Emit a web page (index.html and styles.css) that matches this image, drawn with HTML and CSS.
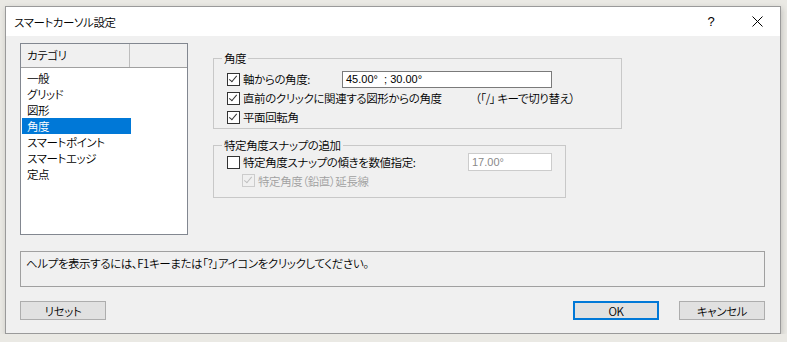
FILE: index.html
```html
<!DOCTYPE html>
<html lang="ja">
<head>
  <meta charset="UTF-8">
  <title>スマートカーソル設定</title>
  <link rel="stylesheet" href="styles.css">
</head>
<body>
  <div class="dialog">
    <div class="titlebar">
      <span class="title">スマートカーソル設定</span>
      <span class="help-btn">?</span>
      <span class="close-btn">
        <svg width="11" height="11" viewBox="0 0 11 11"><path d="M0.5 0.5 L10.5 10.5 M10.5 0.5 L0.5 10.5" stroke="#000" stroke-width="1" fill="none"/></svg>
      </span>
    </div>

    <div class="content">
      <div class="top">
        <div class="category-list">
          <div class="list-header">
            <span class="col-main">カテゴリ</span>
            <span class="col-rest"></span>
          </div>
          <ul class="list-items">
            <li>一般</li>
            <li>グリッド</li>
            <li>図形</li>
            <li class="selected">角度</li>
            <li>スマートポイント</li>
            <li>スマートエッジ</li>
            <li>定点</li>
          </ul>
        </div>

        <div class="settings">
          <fieldset class="group group-angle">
            <legend>角度</legend>
            <div class="row">
              <span class="check checked"></span>
              <span class="label label-axis">軸からの角度:</span>
              <span class="textbox textbox-wide">45.00°&nbsp;&nbsp;; 30.00°</span>
            </div>
            <div class="row">
              <span class="check checked"></span>
              <span class="label label-prev">直前のクリックに関連する図形からの角度</span>
              <span class="note">（「/」 キーで切り替え）</span>
            </div>
            <div class="row">
              <span class="check checked"></span>
              <span class="label">平面回転角</span>
            </div>
          </fieldset>

          <fieldset class="group group-snap">
            <legend>特定角度スナップの追加</legend>
            <div class="row">
              <span class="check"></span>
              <span class="label label-snap">特定角度スナップの傾きを数値指定:</span>
              <span class="textbox textbox-disabled">17.00°</span>
            </div>
            <div class="row row-sub">
              <span class="check checked disabled"></span>
              <span class="label disabled-text">特定角度（鉛直）延長線</span>
            </div>
          </fieldset>
        </div>
      </div>

      <div class="help-box">ヘルプを表示するには、F1キーまたは「?」アイコンをクリックしてください。</div>

      <div class="buttons">
        <button class="btn">リセット</button>
        <span class="spacer"></span>
        <button class="btn btn-default">OK</button>
        <button class="btn">キャンセル</button>
      </div>
    </div>
  </div>
</body>
</html>
```

FILE: styles.css
```css
/* Dialog window */
body {
  margin: 0;
  padding: 0;
  background-color: #eae9e4;
  font-family: "Noto Sans CJK JP", "Noto Sans", sans-serif;
  font-size: 11.5px;
  font-weight: 350;
  letter-spacing: -0.4px;
  font-feature-settings: "palt";
  color: #000;
}

.dialog {
  margin: 6px 0 0 5px;
  width: 774px;
  height: 326px;
  border: 1px solid #9a9a9a;
  background-color: #f0f0f0;
  box-shadow: 1px 2px 6px rgba(0, 0, 0, 0.18);
  display: flex;
  flex-direction: column;
}

.titlebar {
  height: 29px;
  background-color: #fff;
  display: flex;
  align-items: center;
  padding-left: 8px;
}

.title {
  flex: 1;
  font-size: 11.5px;
}

.help-btn {
  width: 46px;
  text-align: center;
  font-size: 13px;
  font-family: "Liberation Sans", sans-serif;
}

.close-btn {
  width: 46px;
  display: flex;
  justify-content: center;
  align-items: center;
}

.content {
  flex: 1;
  padding: 7px 15px 13px 14px;
  display: flex;
  flex-direction: column;
}

.top {
  display: flex;
  align-items: flex-start;
}

/* Category list */
.category-list {
  width: 166px;
  height: 190px;
  border: 1px solid #828790;
  background-color: #fff;
}

.list-header {
  height: 23px;
  display: flex;
  background-color: #f0f0f0;
  border-bottom: 1px solid #a0a0a0;
}

.col-main {
  width: 102px;
  padding-left: 6px;
  line-height: 23px;
  border-right: 1px solid #bdbdbd;
}

.col-rest {
  flex: 1;
}

.list-items {
  list-style: none;
  margin: 2px 0 0 1px;
  padding: 0;
}

.list-items li {
  width: 104px;
  height: 16px;
  line-height: 16px;
  padding-left: 5px;
}

.list-items li.selected {
  background-color: #0078d7;
  color: #fff;
}

/* Settings groups */
.settings {
  margin-left: 25px;
  margin-top: 8px;
  display: flex;
  flex-direction: column;
  gap: 9px;
}

.group {
  margin: 0;
  padding: 0 0 0 13px;
  border: 1px solid #c8c8c8;
}

.group legend {
  margin-left: -5px;
  padding: 0 2px;
  line-height: 14px;
}

.group-angle {
  width: 394px;
  padding-top: 5px;
  padding-bottom: 1px;
}

.group-snap {
  width: 338px;
  padding-top: 1px;
  padding-bottom: 7px;
}

.row {
  height: 18px;
  display: flex;
  align-items: center;
  margin-bottom: 1px;
}

.row-sub {
  height: 17px;
  padding-left: 15px;
}

.check {
  width: 11px;
  height: 11px;
  border: 1px solid #333;
  background-color: #fff;
  margin-right: 3px;
  flex-shrink: 0;
  position: relative;
}

.check.checked::after {
  content: "";
  position: absolute;
  left: 3px;
  top: 0px;
  width: 3px;
  height: 7px;
  border-right: 1px solid #333;
  border-bottom: 1px solid #333;
  transform: rotate(40deg);
}

.check.disabled {
  border-color: #cccccc;
  background-color: #f0f0f0;
}

.check.disabled::after {
  border-color: #bfbfbf;
}

.label {
  white-space: nowrap;
}

.label-axis {
  width: 99px;
}

.label-prev {
  width: 232px;
}

.label-snap {
  width: 225px;
}

.disabled-text {
  color: #a0a0a0;
}

.note {
  white-space: nowrap;
}

.textbox {
  box-sizing: border-box;
  background-color: #fff;
  border: 1px solid #7a7a7a;
  font-family: "Liberation Sans", sans-serif;
  font-size: 11px;
  font-weight: 400;
  letter-spacing: 0;
  padding-left: 3px;
}

.textbox-wide {
  width: 210px;
  height: 17px;
  line-height: 15px;
}

.textbox-disabled {
  width: 84px;
  height: 18px;
  line-height: 16px;
  border-color: #cccccc;
  color: #8a8a8a;
}

/* Help box */
.help-box {
  margin-top: 16px;
  height: 30px;
  border: 1px solid #a0a0a0;
  padding: 4px 5px 0;
  line-height: 15px;
}

/* Buttons */
.buttons {
  margin-top: 14px;
  display: flex;
  gap: 20px;
}

.spacer {
  flex: 1;
}

.btn {
  box-sizing: border-box;
  width: 86px;
  height: 19px;
  padding: 0;
  border: 1px solid #adadad;
  background-color: #e1e1e1;
  font-family: "Noto Sans CJK JP", sans-serif;
  font-feature-settings: "palt";
  font-weight: 350;
  letter-spacing: -0.4px;
  font-size: 11.5px;
  line-height: 16px;
  color: #000;
}

.btn-default {
  border: 2px solid #0078d7;
}
```
